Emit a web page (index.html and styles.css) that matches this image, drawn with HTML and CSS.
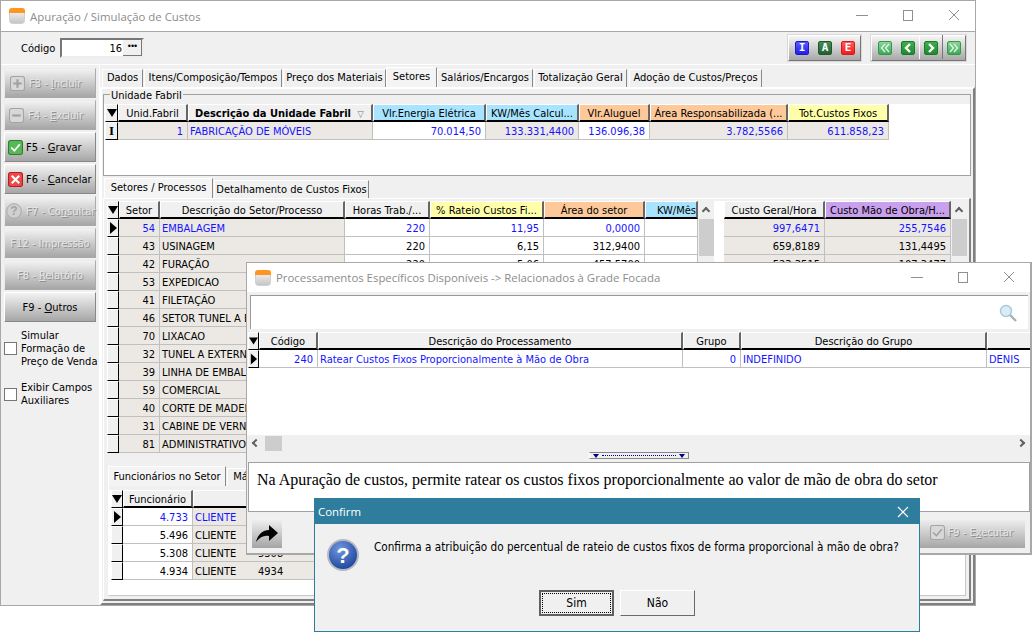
FILE: index.html
```html
<!DOCTYPE html>
<html lang="pt">
<head>
    <meta charset="UTF-8">
    <title>Apuração / Simulação de Custos</title>
    <link rel="stylesheet" href="styles.css">
</head>
<body>

<svg class="defs" width="0" height="0">
    <defs>
        <linearGradient id="appGrad" x1="0" y1="0" x2="0" y2="1">
            <stop offset="0" stop-color="#fafafa"/><stop offset="1" stop-color="#c4c4c4"/>
        </linearGradient>
        <symbol id="appIcon" viewBox="0 0 16 16">
            <rect x="0.5" y="0.5" width="15" height="15" rx="3" fill="url(#appGrad)" stroke="#d0d0d0"/>
            <path d="M0 5V3a3 3 0 0 1 3-3h10a3 3 0 0 1 3 3v2z" fill="#ff9420"/>
        </symbol>
        <symbol id="tri" viewBox="0 0 10 12"><path d="M2 0l7 6-7 6z" fill="#000"/></symbol>
        <symbol id="triDown" viewBox="0 0 10 10"><path d="M0 1h10L5 9z" fill="#000"/></symbol>
    </defs>
</svg>

<!-- janela principal -->
<div class="win main-win">
    <div class="titlebar">
        <svg class="app-icon"><use href="#appIcon"/></svg>
        <span class="title">Apuração / Simulação de Custos</span>
        <div class="win-btns">
            <svg width="12" height="12" viewBox="0 0 12 12"><path d="M0 5.5h12" stroke="#909090"/></svg>
            <svg width="12" height="12" viewBox="0 0 12 12"><rect x="1.5" y="0.5" width="9" height="10" fill="none" stroke="#909090"/></svg>
            <svg width="12" height="12" viewBox="0 0 12 12"><path d="M1 0l10 10M11 0L1 10" stroke="#909090"/></svg>
        </div>
    </div>

    <div class="codebar">
        <span class="code-label">Código</span>
        <div class="code-input"><span class="code-val">16</span><span class="code-dots">•••</span></div>
        <div class="tool-group grp-iae">
            <b class="sq blue">I</b>
            <b class="sq dkgreen">A</b>
            <b class="sq red">E</b>
        </div>
        <div class="tool-group grp-nav">
            <b class="sq green light"><svg width="12" height="12" viewBox="0 0 12 12"><path d="M6 2L2.5 6 6 10M10 2L6.5 6 10 10" fill="none" stroke="#e4f6e4" stroke-width="1.3"/></svg></b>
            <b class="sq green"><svg width="12" height="12" viewBox="0 0 12 12"><path d="M8 2L4 6l4 4" fill="none" stroke="#fff" stroke-width="2.4"/></svg></b>
            <b class="sq green sep-w"><svg width="12" height="12" viewBox="0 0 12 12"><path d="M4 2l4 4-4 4" fill="none" stroke="#fff" stroke-width="2.4"/></svg></b>
            <b class="sq green light sep-g"><svg width="12" height="12" viewBox="0 0 12 12"><path d="M2 2l3.500 4L2 10M6 2l3.500 4L6 10" fill="none" stroke="#e4f6e4" stroke-width="1.3"/></svg></b>
        </div>
    </div>

    <div class="main-body">
        <div class="sidebar">
            <div class="sbtn off">
                <svg class="ico" viewBox="0 0 14 14"><rect x="0.5" y="0.5" width="13" height="13" rx="2" fill="#d8d8d8" stroke="#a4a4a4"/><path d="M7 3v8M3 7h8" stroke="#a0a0a0" stroke-width="2"/></svg>
                <span>F3 - <u>I</u>ncluir</span>
            </div>
            <div class="sbtn off minus">
                <svg class="ico" viewBox="0 0 14 14"><rect x="0.5" y="0.5" width="13" height="13" rx="2" fill="#d8d8d8" stroke="#a4a4a4"/><path d="M3 7h8" stroke="#a0a0a0" stroke-width="2"/></svg>
                <span>F4 - <u>E</u>xcluir</span>
            </div>
            <div class="sbtn">
                <svg class="ico" viewBox="0 0 14 14"><rect x="0.5" y="0.5" width="13" height="13" rx="2" fill="#58b858" stroke="#2f7d2f"/><path d="M3 7l3 3 5-6" fill="none" stroke="#fff" stroke-width="1.6"/></svg>
                <span>F5 - <u>G</u>ravar</span>
            </div>
            <div class="sbtn">
                <svg class="ico" viewBox="0 0 14 14"><rect x="0.5" y="0.5" width="13" height="13" rx="2" fill="#f04848" stroke="#b02020"/><path d="M3.500 3.500l7 7M10.500 3.500l-7 7" stroke="#fff" stroke-width="2"/></svg>
                <span>F6 - <u>C</u>ancelar</span>
            </div>
            <div class="sbtn off help">
                <svg class="ico q-ico" viewBox="0 0 16 16"><circle cx="8" cy="8" r="7.300" fill="#d0d0d0" stroke="#a8a8a8"/><text x="8" y="12" text-anchor="middle" class="ico-q">?</text></svg>
                <span>F7 - Co<u>n</u>sultar</span>
            </div>
            <div class="sbtn off center"><span>F12 - Impressão</span></div>
            <div class="sbtn off center"><span>F8 - <u>R</u>elatório</span></div>
            <div class="sbtn center"><span>F9 - <u>O</u>utros</span></div>

            <label class="check first"><i class="box"></i><span>Simular<br>Formação de<br>Preço de Venda</span></label>
            <label class="check"><i class="box"></i><span>Exibir Campos<br>Auxiliares</span></label>
        </div>

        <div class="content">
            <div class="tabs top-tabs">
                <span class="tab">Dados</span>
                <span class="tab">Itens/Composição/Tempos</span>
                <span class="tab">Preço dos Materiais</span>
                <span class="tab on">Setores</span>
                <span class="tab">Salários/Encargos</span>
                <span class="tab">Totalização Geral</span>
                <span class="tab">Adoção de Custos/Preços</span>
            </div>

            <div class="panel-a">
                <div class="groupbox">
                    <span class="legend">Unidade Fabril</span>
                    <div class="grid g-unid">
                        <div class="h ind"><svg width="10" height="10"><use href="#triDown"/></svg></div>
                        <div class="h">Unid.Fabril</div>
                        <div class="h strong">Descrição da Unidade Fabril <em class="sort">▽</em></div>
                        <div class="h blue-h">Vlr.Energia Elétrica</div>
                        <div class="h blue-h">KW/Mês Calcul...</div>
                        <div class="h orange-h">Vlr.Aluguel</div>
                        <div class="h orange-h">Área Responsabilizada (...</div>
                        <div class="h yellow-h">Tot.Custos Fixos</div>

                        <div class="ind"><span class="ibeam">I</span></div>
                        <div class="c gr r sel">1</div>
                        <div class="c gr sel">FABRICAÇÃO DE MÓVEIS</div>
                        <div class="c r sel">70.014,50</div>
                        <div class="c gr r sel">133.331,4400</div>
                        <div class="c r sel">136.096,38</div>
                        <div class="c gr r sel">3.782,5566</div>
                        <div class="c gr r sel">611.858,23</div>
                    </div>
                </div>

                <div class="tabs sub-tabs">
                    <span class="tab on">Setores / Processos</span>
                    <span class="tab">Detalhamento de Custos Fixos</span>
                </div>

                <div class="panel-b">
                    <div class="split">
                        <div class="grid g-setor">
                            <div class="h ind"><svg width="10" height="10"><use href="#triDown"/></svg></div>
                            <div class="h">Setor</div>
                            <div class="h">Descrição do Setor/Processo</div>
                            <div class="h">Horas Trab./...</div>
                            <div class="h yellow-h">% Rateio Custos Fi...</div>
                            <div class="h orange-h">Área do setor</div>
                            <div class="h blue-h kw">KW/Mês</div>

                            <div class="ind"><svg width="10" height="12"><use href="#tri"/></svg></div><div class="c gr r sel">54</div><div class="c gr sel">EMBALAGEM</div><div class="c r sel">220</div><div class="c r sel">11,95</div><div class="c r sel">0,0000</div><div class="c"></div>
                            <div class="ind"></div><div class="c gr r">43</div><div class="c gr">USINAGEM</div><div class="c r">220</div><div class="c r">6,15</div><div class="c r">312,9400</div><div class="c"></div>
                            <div class="ind"></div><div class="c gr r">42</div><div class="c gr">FURAÇÃO</div><div class="c r">220</div><div class="c r">5,06</div><div class="c r">457,5700</div><div class="c"></div>
                            <div class="ind"></div><div class="c gr r">53</div><div class="c gr">EXPEDICAO</div><div class="c"></div><div class="c"></div><div class="c"></div><div class="c"></div>
                            <div class="ind"></div><div class="c gr r">41</div><div class="c gr">FILETAÇÃO</div><div class="c"></div><div class="c"></div><div class="c"></div><div class="c"></div>
                            <div class="ind"></div><div class="c gr r">46</div><div class="c gr">SETOR TUNEL A ESPELHO</div><div class="c"></div><div class="c"></div><div class="c"></div><div class="c"></div>
                            <div class="ind"></div><div class="c gr r">70</div><div class="c gr">LIXACAO</div><div class="c"></div><div class="c"></div><div class="c"></div><div class="c"></div>
                            <div class="ind"></div><div class="c gr r">32</div><div class="c gr">TUNEL A EXTERNO</div><div class="c"></div><div class="c"></div><div class="c"></div><div class="c"></div>
                            <div class="ind"></div><div class="c gr r">39</div><div class="c gr">LINHA DE EMBALAGEM</div><div class="c"></div><div class="c"></div><div class="c"></div><div class="c"></div>
                            <div class="ind"></div><div class="c gr r">59</div><div class="c gr">COMERCIAL</div><div class="c"></div><div class="c"></div><div class="c"></div><div class="c"></div>
                            <div class="ind"></div><div class="c gr r">40</div><div class="c gr">CORTE DE MADEIRA</div><div class="c"></div><div class="c"></div><div class="c"></div><div class="c"></div>
                            <div class="ind"></div><div class="c gr r">31</div><div class="c gr">CABINE DE VERNIZ</div><div class="c"></div><div class="c"></div><div class="c"></div><div class="c"></div>
                            <div class="ind"></div><div class="c gr r">81</div><div class="c gr">ADMINISTRATIVO</div><div class="c"></div><div class="c"></div><div class="c"></div><div class="c"></div>
                        </div>
                        <div class="vscroll"><span class="arrow up"></span><span class="thumb"></span></div>
                        <div class="split-gap"></div>
                        <div class="grid g-custo">
                            <div class="h">Custo Geral/Hora</div>
                            <div class="h purple-h">Custo Mão de Obra/H...</div>
                            <div class="c gr r sel">997,6471</div><div class="c gr r sel">255,7546</div>
                            <div class="c gr r">659,8189</div><div class="c gr r">131,4495</div>
                            <div class="c gr r">523,3515</div><div class="c gr r">107,3477</div>
                        </div>
                        <div class="vscroll"><span class="arrow up"></span><span class="thumb"></span></div>
                    </div>

                    <div class="tabs low-tabs">
                        <span class="tab on">Funcionários no Setor</span>
                        <span class="tab">Máquinas</span>
                    </div>
                    <div class="panel-c">
                        <div class="grid g-func">
                            <div class="h ind"><svg width="10" height="10"><use href="#triDown"/></svg></div>
                            <div class="h">Funcionário</div>
                            <div class="h plain"></div>
                            <div class="h plain"></div>

                            <div class="ind"><svg width="10" height="12"><use href="#tri"/></svg></div><div class="c r sel">4.733</div><div class="c gr sel nb">CLIENTE</div><div class="c gr sel">4733</div>
                            <div class="ind"></div><div class="c r">5.496</div><div class="c gr nb">CLIENTE</div><div class="c gr">5496</div>
                            <div class="ind"></div><div class="c r">5.308</div><div class="c gr nb">CLIENTE</div><div class="c gr">5308</div>
                            <div class="ind"></div><div class="c r">4.934</div><div class="c gr nb">CLIENTE</div><div class="c gr">4934</div>
                        </div>
                    </div>
                </div>
            </div>
        </div>
    </div>
</div>

<!-- processamentos -->
<div class="win proc-win">
    <div class="titlebar proc-title">
        <svg class="app-icon"><use href="#appIcon"/></svg>
        <span class="title">Processamentos Específicos Disponíveis -&gt; Relacionados à Grade Focada</span>
        <div class="win-btns">
            <svg width="12" height="12" viewBox="0 0 12 12"><path d="M0 5.500h12" stroke="#909090"/></svg>
            <svg width="12" height="12" viewBox="0 0 12 12"><rect x="1.500" y="0.500" width="9" height="10" fill="none" stroke="#909090"/></svg>
            <svg width="12" height="12" viewBox="0 0 12 12"><path d="M1 0l10 10M11 0L1 10" stroke="#909090"/></svg>
        </div>
    </div>
    <div class="searchbox">
        <svg width="18" height="18" viewBox="0 0 18 18"><circle cx="7" cy="7" r="5.500" fill="#d8ecf8" stroke="#a8c8dc" stroke-width="1.400"/><path d="M11 11l6 6" stroke="#a8b0b8" stroke-width="2.400"/></svg>
    </div>
    <div class="grid g-proc">
        <div class="h ind"><svg width="10" height="10"><use href="#triDown"/></svg></div>
        <div class="h">Código</div>
        <div class="h">Descrição do Processamento</div>
        <div class="h">Grupo</div>
        <div class="h">Descrição do Grupo</div>
        <div class="h plain"></div>

        <div class="ind"><svg width="10" height="12"><use href="#tri"/></svg></div>
        <div class="c r sel">240</div>
        <div class="c sel">Ratear Custos Fixos Proporcionalmente à Mão de Obra</div>
        <div class="c r sel">0</div>
        <div class="c sel">INDEFINIDO</div>
        <div class="c sel">DENIS</div>
    </div>
    <div class="proc-space"></div>
    <div class="hscroll">
        <span class="arrow left"></span><span class="hthumb"></span><span class="arrow right"></span>
    </div>
    <div class="grip-row"><div class="grip"><i class="grip-tri"></i><i class="grip-dots"></i><i class="grip-tri"></i></div></div>
    <div class="proc-desc">Na Apuração de custos, permite ratear os custos fixos proporcionalmente ao valor de mão de obra do setor</div>
    <div class="proc-foot">
        <div class="go-btn">
            <svg width="24" height="24" viewBox="0 0 24 24"><path d="M1 21C3 13 8 9 14 9V4l9 8-9 8v-5C9 14 5 16 1 21z" fill="#000"/></svg>
        </div>
        <div class="exec-btn">
            <svg class="ico" viewBox="0 0 14 14"><rect x="0.500" y="0.500" width="13" height="13" rx="2" fill="#d8d8d8" stroke="#a4a4a4"/><path d="M3 7l3 3 5-6" fill="none" stroke="#a0a0a0" stroke-width="1.400"/></svg>
            <span>F9 - E<u>x</u>ecutar</span>
        </div>
    </div>
</div>

<!-- confirmacao -->
<div class="win confirm">
    <div class="confirm-title">
        <span>Confirm</span>
        <svg width="12" height="12" viewBox="0 0 12 12"><path d="M1 1l10 10M11 1L1 11" stroke="#fff" stroke-width="1.200"/></svg>
    </div>
    <div class="confirm-msg">
        <svg width="32" height="32" viewBox="0 0 32 32">
            <defs><radialGradient id="qGrad" cx="0.4" cy="0.3" r="0.8"><stop offset="0" stop-color="#6f96de"/><stop offset="1" stop-color="#123c94"/></radialGradient></defs>
            <circle cx="16" cy="16" r="15" fill="url(#qGrad)" stroke="#b4b8c0" stroke-width="2"/>
            <text x="16" y="24" text-anchor="middle" class="q-mark">?</text>
        </svg>
        <span>Confirma a atribuição do percentual de rateio de custos fixos de forma proporcional à mão de obra?</span>
    </div>
    <div class="confirm-btns">
        <span class="dbtn default"><span class="focus">Sim</span></span>
        <span class="dbtn">Não</span>
    </div>
</div>

</body>
</html>
```

FILE: styles.css
```css
html, body {
    margin: 0;
    padding: 0;
    background: #fff;
    overflow: hidden;
}
body {
    width: 1036px;
    height: 636px;
    position: relative;
    font-family: "DejaVu Sans", sans-serif;
    font-stretch: condensed;
    font-size: 11px;
    color: #000;
}
.defs {
    position: absolute;
}
.win {
    position: absolute;
    box-sizing: border-box;
    background: #f0f0f0;
}

/* janela principal */
.main-win {
    left: 0;
    top: 0;
    width: 976px;
    height: 606px;
    border: 1px solid #a8a8a8;
    display: flex;
    flex-direction: column;
}
.titlebar {
    height: 30px;
    flex: none;
    background: #fff;
    border-bottom: 1px solid #a8a8a8;
    display: flex;
    align-items: center;
    padding-left: 8px;
}
.app-icon {
    width: 16px;
    height: 16px;
    margin-right: 5px;
}
.title {
    font-family: "Open Sans", sans-serif;
    font-stretch: normal;
    font-size: 11.4px;
    color: #8c8c8c;
}
.win-btns {
    margin-left: auto;
    display: flex;
    gap: 34px;
    padding-right: 15px;
}
.codebar {
    height: 33px;
    flex: none;
    display: flex;
    align-items: center;
    border-bottom: 1px solid #fff;
    box-sizing: border-box;
}
.code-label {
    margin-left: 20px;
    width: 39px;
}
.code-input {
    width: 84px;
    height: 20px;
    box-sizing: border-box;
    border: 2px solid;
    border-color: #777 #eee #eee #777;
    background: #fff;
    display: flex;
    align-items: center;
}
.code-val {
    flex: 1;
    text-align: right;
    padding-right: 1px;
}
.code-dots {
    width: 19px;
    height: 16px;
    background: #f0f0f0;
    box-shadow: inset -1px -1px 0 #777;
    font-family: "Liberation Sans", sans-serif;
    font-size: 9px;
    line-height: 13px;
    text-align: center;
}
.tool-group {
    height: 26px;
    box-sizing: border-box;
    display: flex;
    gap: 9px;
    border: 1px solid;
    border-color: #fff #777 #777 #fff;
    background: linear-gradient(#f6f6f6, #a8a8a8);
    align-items: center;
    padding-left: 6px;
    outline: 1px solid #d8d8d8;
}
.grp-iae {
    margin-left: 644px;
    width: 73px;
}
.grp-nav {
    margin-left: 10px;
    width: 95px;
}
.sq {
    display: flex;
    align-items: center;
    justify-content: center;
    position: relative;
    width: 14px;
    height: 14px;
    box-sizing: border-box;
    border: 1px solid;
    border-radius: 2px;
    color: #fff;
    font-family: "DejaVu Sans Mono", monospace;
    font-stretch: normal;
    font-size: 11px;
    font-weight: bold;
    line-height: 12px;
}
.sq.blue { background: linear-gradient(#5a5aff, #2020e8); border-color: #1a1ac8; }
.sq.dkgreen { background: linear-gradient(#4c8c5c, #1f6030); border-color: #1c5a2c; }
.sq.red { background: linear-gradient(#ff5a5a, #f01c1c); border-color: #d81818; }
.sq.green { background: linear-gradient(#3fae4c, #1f8a30); border-color: #1a7a2a; }
.sq.green.light { background: linear-gradient(#8ad49a, #3fa858); border-color: #2f9a48; }
.sq.sep-w::before,
.sq.sep-g::before {
    content: "";
    position: absolute;
    left: -6px;
    top: -7px;
    height: 24px;
    border-left: 1px solid #fff;
}
.sq.sep-g::before {
    border-left-color: #777;
}

.main-body {
    flex: 1;
    display: flex;
    min-height: 0;
}
.sidebar {
    width: 99px;
    flex: none;
    box-sizing: border-box;
    padding: 3px 0 0 3px;
    border-right: 1px solid #fff;
}
.sbtn {
    width: 92px;
    height: 30px;
    box-sizing: border-box;
    margin-bottom: 2px;
    border-top: 1px solid #fff;
    border-left: 1px solid #fff;
    border-right: 1px solid #888;
    border-bottom: 1px solid #888;
    background: linear-gradient(#f2f2f2, #a6a6a6);
    display: flex;
    align-items: center;
    padding-left: 3px;
    gap: 3px;
    white-space: nowrap;
}
.sbtn.off {
    color: #e4e4e4;
    text-shadow: 1px 1px 0 #909090;
    border-color: #ececec #aaa #aaa #ececec;
    padding-left: 5px;
    gap: 4px;
}
.sbtn.minus {
    padding-left: 4px;
}
.sbtn.help {
    padding-left: 1px;
}
.sbtn.center {
    justify-content: center;
    padding-left: 0;
}
.ico {
    width: 15px;
    height: 15px;
    flex: none;
}
.q-ico {
    width: 16px;
    height: 16px;
}
.ico-q {
    font-family: "Liberation Sans", sans-serif;
    font-size: 12px;
    font-weight: bold;
    fill: #a4a4a4;
    text-shadow: none;
}
.check {
    display: flex;
    align-items: center;
    margin-top: 13px;
    line-height: 13px;
    gap: 4px;
    white-space: nowrap;
}
.check.first {
    margin-top: 7px;
}
.box {
    width: 11px;
    height: 11px;
    flex: none;
    background: #fff;
    border: 1px solid #777;
}

.content {
    flex: 1;
    min-width: 0;
    padding-top: 1px;
}
.tabs {
    display: flex;
    align-items: flex-end;
}
.tab {
    height: 18px;
    box-sizing: border-box;
    line-height: 16px;
    text-align: center;
    border: 1px solid;
    border-color: #fff #888 transparent #fff;
    border-bottom: 0;
    margin-right: 1px;
    white-space: nowrap;
    overflow: hidden;
    background: #f0f0f0;
}
.tab.on {
    height: 20px;
    background: #f4f4f4;
    line-height: 17px;
}
.top-tabs {
    height: 21px;
    padding-left: 2px;
}
.top-tabs .tab:nth-child(1) { width: 41px; }
.top-tabs .tab:nth-child(2) { width: 138px; }
.top-tabs .tab:nth-child(3) { width: 103px; margin-right: 0; }
.top-tabs .tab:nth-child(4) { width: 51px; margin-right: 0; }
.top-tabs .tab:nth-child(5) { width: 96px; }
.top-tabs .tab:nth-child(6) { width: 93px; margin-right: 2px; }
.top-tabs .tab:nth-child(7) { width: 133px; }
.panel-a {
    height: 518px;
    box-sizing: border-box;
    border: 2px solid #808080;
    border-left-color: #fff;
    border-top-color: #fff;
    padding: 5px 2px 0 1px;
}
.groupbox {
    position: relative;
    height: 82px;
    box-sizing: border-box;
    border: 1px solid #a0a0a0;
    padding-top: 9px;
}
.legend {
    position: absolute;
    left: 6px;
    top: -5px;
    background: #f0f0f0;
    padding: 0 1px;
    line-height: 12px;
}
.groupbox .grid {
    background: #fff;
    padding-left: 1px;
    height: 71px;
    align-content: start;
}

/* grades */
.grid {
    display: grid;
    grid-auto-rows: 18px;
    overflow: hidden;
    white-space: nowrap;
}
.g-unid { grid-template-columns: 13px 70px 185px 113px 93px 71px 138px 101px; }
.g-setor { grid-template-columns: 12px 41px 185px 85px 114px 101px 53px; width: 591px; flex: none; }
.g-custo { grid-template-columns: 101px 126px; width: 227px; flex: none; align-content: start; background: #fff; }
.g-func { grid-template-columns: 12px 70px 63px 300px; }
.g-proc { grid-template-columns: 11px 59px 365px 58px 246px 45px; }
.h {
    height: 18px;
    box-sizing: border-box;
    background: #f0f0f0;
    border: 1px solid;
    border-color: #fff #666 #000 #fff;
    border-right-width: 2px;
    border-bottom-width: 2px;
    text-align: center;
    line-height: 18px;
    overflow: hidden;
}
.h.plain {
    border-right-color: transparent;
}
.h.strong {
    font-weight: bold;
    text-align: left;
    padding-left: 6px;
}
.sort {
    font-style: normal;
    font-weight: normal;
    color: #777;
    font-size: 9px;
    margin-left: 3px;
}
.blue-h { background: #a8e4ff; }
.orange-h { background: #fdc99a; }
.yellow-h { background: #ffffaa; }
.purple-h { background: #c9a0ee; }
.kw {
    text-align: right;
}
.c {
    height: 18px;
    box-sizing: border-box;
    background: #fff;
    border-right: 1px solid #c0c0c0;
    border-bottom: 1px solid #c0c0c0;
    padding: 0 4px 0 2px;
    line-height: 20px;
    overflow: hidden;
}
.c.gr { background: #ece9e4; }
.c.r { text-align: right; }
.c.sel { color: #1414ff; }
.c.nb { border-right: 0; }
.ind {
    height: 18px;
    box-sizing: border-box;
    background: #f0f0f0;
    border: 1px solid;
    border-color: #fff #000 #000 #fff;
    display: flex;
    align-items: center;
    justify-content: center;
}
.h.ind {
    border-right-width: 1px;
}
.ibeam {
    font-family: "Liberation Serif", serif;
    font-size: 13px;
    line-height: 14px;
    font-weight: bold;
}

.sub-tabs {
    height: 21px;
    margin-top: 1px;
    padding-left: 1px;
}
.sub-tabs .tab:nth-child(1) { width: 109px; }
.sub-tabs .tab:nth-child(2) { width: 155px; line-height: 18px; }
.panel-b {
    height: 403px;
    box-sizing: border-box;
    border: 1px solid #808080;
    border-top-color: #fff;
    border-left-color: #fff;
    border-right-width: 2px;
    border-bottom-width: 2px;
    padding: 2px 2px 0 3px;
}
.split {
    display: flex;
    height: 253px;
}
.vscroll {
    width: 16px;
    flex: none;
    background: #f0f0f0;
    display: flex;
    flex-direction: column;
    align-items: center;
}
.vscroll .thumb {
    display: block;
    width: 15px;
    height: 37px;
    background: #cdcdcd;
}
.vscroll .arrow {
    height: 18px;
    flex: none;
}
.arrow {
    display: block;
}
.arrow::before {
    content: "";
    display: block;
    width: 4px;
    height: 4px;
    border: solid #606060;
    border-width: 2px 0 0 2px;
}
.arrow.up::before { transform: rotate(45deg); margin-top: 7px; }
.arrow.left::before { transform: rotate(-45deg); }
.arrow.right::before { transform: rotate(135deg); }
.split-gap {
    width: 10px;
    flex: none;
    background: #fff;
}
.low-tabs {
    height: 21px;
    margin-top: 11px;
    padding-left: 1px;
}
.low-tabs .tab:nth-child(1) { width: 118px; line-height: 19px; }
.low-tabs .tab:nth-child(2) { width: 60px; }
.panel-c {
    height: 110px;
    box-sizing: border-box;
    border: 1px solid #c8c8c8;
    border-top: 0;
    border-left-color: #fff;
    padding: 4px 0 0 2px;
    margin-left: 1px;
    margin-right: 1px;
    background: linear-gradient(#f0f0f0 4px, #fff 4px);
}

/* processamentos */
.proc-win {
    left: 246px;
    top: 262px;
    width: 786px;
    height: 293px;
    border: 2px solid #a8a8a8;
    border-left-width: 1px;
    border-top-width: 1px;
    display: flex;
    flex-direction: column;
    background: #f0f0f0;
}
.proc-title {
    border-bottom: 0;
    height: 29px;
}
.searchbox {
    height: 34px;
    flex: none;
    box-sizing: border-box;
    margin: 3px 2px 0 3px;
    background: #fff;
    border-top: 1px solid #999;
    border-left: 1px solid #999;
    display: flex;
    align-items: center;
    justify-content: flex-end;
    padding-right: 11px;
}
.g-proc {
    margin: 3px 0 0 1px;
    flex: none;
}
.proc-space {
    height: 67px;
    flex: none;
    background: #fff;
}
.hscroll {
    height: 16px;
    flex: none;
    display: flex;
    align-items: center;
    padding: 0 6px;
}
.hthumb {
    width: 17px;
    height: 15px;
    margin-left: 6px;
    background: #cdcdcd;
}
.hscroll .right {
    margin-left: auto;
}
.grip-row {
    height: 11px;
    flex: none;
    display: flex;
    justify-content: center;
}
.grip {
    width: 100px;
    height: 7px;
    box-sizing: border-box;
    margin-top: 1px;
    border: 1px solid;
    border-color: #888 #888 #888 #fff;
    display: flex;
    align-items: center;
    padding: 0 3px;
    gap: 3px;
}
.grip-tri {
    width: 0;
    height: 0;
    border: 3px solid transparent;
    border-top: 4px solid #000080;
    border-bottom: 0;
}
.grip-dots {
    flex: 1;
    border-top: 1px dotted #000080;
}
.proc-desc {
    height: 50px;
    flex: none;
    box-sizing: border-box;
    margin: 0 0 0 1px;
    background: #fff;
    border: 1px solid #a0a0a0;
    padding: 8px 8px;
    font-family: "Liberation Serif", serif;
    font-stretch: normal;
    font-size: 16px;
    line-height: 18px;
    white-space: nowrap;
    overflow: hidden;
}
.proc-foot {
    flex: 1;
    display: flex;
    justify-content: space-between;
    align-items: center;
    padding: 0 5px 0 5px;
}
.go-btn {
    width: 30px;
    height: 30px;
    background: linear-gradient(#f4f4f4, #a4a4a4);
    display: flex;
    align-items: center;
    justify-content: center;
}
.exec-btn {
    width: 110px;
    height: 30px;
    box-sizing: border-box;
    padding-right: 12px;
    background: linear-gradient(#f2f2f2, #a6a6a6);
    color: #e4e4e4;
    text-shadow: 1px 1px 0 #909090;
    display: flex;
    align-items: center;
    justify-content: flex-end;
    gap: 3px;
}

/* confirm */
.confirm {
    left: 314px;
    top: 498px;
    width: 606px;
    height: 134px;
    border: 1px solid #2e7d9c;
}
.confirm-title {
    height: 25px;
    background: #2e7d9c;
    color: #fff;
    display: flex;
    align-items: center;
    justify-content: space-between;
    padding: 0 10px 0 3px;
    font-family: "Open Sans", sans-serif;
    font-stretch: normal;
    font-size: 11.4px;
}
.confirm-msg {
    display: flex;
    align-items: flex-start;
    box-sizing: border-box;
    padding: 15px 0 0 12px;
    height: 66px;
    gap: 15px;
    font-size: 11.65px;
}
.confirm-msg span {
    margin-top: 1px;
}
.q-mark {
    font-family: "Liberation Sans", sans-serif;
    font-size: 22px;
    font-weight: bold;
    fill: #fff;
}
.confirm-btns {
    display: flex;
    gap: 6px;
    padding-left: 224px;
}
.dbtn {
    width: 75px;
    height: 26px;
    box-sizing: border-box;
    border: 1px solid;
    border-color: #fff #696969 #696969 #fff;
    display: flex;
    align-items: center;
    justify-content: center;
    font-size: 12px;
}
.dbtn.default {
    border: 2px solid #606060;
    padding: 1px;
}
.focus {
    flex: 1;
    align-self: stretch;
    border: 1px dotted #000;
    text-align: center;
    line-height: 18px;
}
```
